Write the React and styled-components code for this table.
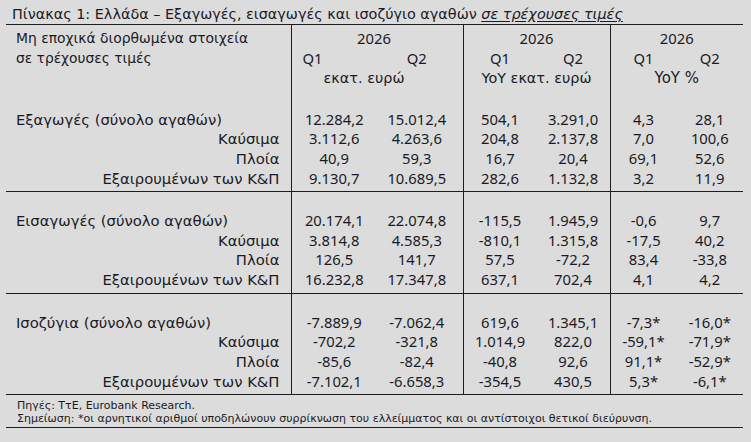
import React from "react";
import styled, { createGlobalStyle } from "styled-components";

const Global = createGlobalStyle`
  html, body { margin: 0; padding: 0; background: #dcdcdc; }
  body { font-family: "Noto Sans", "Open Sans", sans-serif; color: #1b1b26; }
`;

const wordFont = `"DejaVu Sans", "Noto Sans", sans-serif`;

const Page = styled.div`
  width: 751px;
  height: 442px;
  box-sizing: border-box;
  padding: 4px 8px 0 6px;
  background: #dcdcdc;
`;

const Title = styled.div`
  font-family: ${wordFont};
  font-size: 14.4px;
  line-height: 20px;
  height: 20px;
  padding-left: 6px;
  border-bottom: 1.5px solid #1d1d1d;
  white-space: nowrap;
`;

const TitleEm = styled.span`
  font-style: italic;
  text-decoration: underline;
  text-underline-offset: 2px;
`;

const Table = styled.table`
  width: 737px;
  table-layout: fixed;
  border-collapse: collapse;
  font-size: 14.8px;
`;

const Row = styled.tr`
  height: ${(p) => p.$h}px;
`;

const Cell = styled.td`
  padding: 0;
  padding-left: ${(p) => p.$pl || 0}px;
  padding-right: ${(p) => p.$pr || 0}px;
  text-align: ${(p) => p.$align || "center"};
  vertical-align: ${(p) => p.$valign || "middle"};
  line-height: 19.7px;
  white-space: nowrap;
  border-left: ${(p) => (p.$sep ? "1.5px solid #1d1d1d" : "none")};
  border-bottom: ${(p) => (p.$rule ? "1.5px solid #1d1d1d" : "none")};
`;

const WordCell = styled(Cell)`
  font-family: ${wordFont};
  font-size: ${(p) => p.$fs || 14.8}px;
`;

const Footer = styled.div`
  font-family: ${wordFont};
  font-size: 11px;
  line-height: 13px;
  padding: 3.5px 0 2px 11px;
  border-bottom: 1.5px solid #1d1d1d;
  white-space: nowrap;
`;

const sections = [
  [
    ["Εξαγωγές (σύνολο αγαθών)", "12.284,2", "15.012,4", "504,1", "3.291,0", "4,3", "28,1"],
    ["Καύσιμα", "3.112,6", "4.263,6", "204,8", "2.137,8", "7,0", "100,6"],
    ["Πλοία", "40,9", "59,3", "16,7", "20,4", "69,1", "52,6"],
    ["Εξαιρουμένων των Κ&Π", "9.130,7", "10.689,5", "282,6", "1.132,8", "3,2", "11,9"],
  ],
  [
    ["Εισαγωγές (σύνολο αγαθών)", "20.174,1", "22.074,8", "-115,5", "1.945,9", "-0,6", "9,7"],
    ["Καύσιμα", "3.814,8", "4.585,3", "-810,1", "1.315,8", "-17,5", "40,2"],
    ["Πλοία", "126,5", "141,7", "57,5", "-72,2", "83,4", "-33,8"],
    ["Εξαιρουμένων των Κ&Π", "16.232,8", "17.347,8", "637,1", "702,4", "4,1", "4,2"],
  ],
  [
    ["Ισοζύγια (σύνολο αγαθών)", "-7.889,9", "-7.062,4", "619,6", "1.345,1", "-7,3*", "-16,0*"],
    ["Καύσιμα", "-702,2", "-321,8", "1.014,9", "822,0", "-59,1*", "-71,9*"],
    ["Πλοία", "-85,6", "-82,4", "-40,8", "92,6", "91,1*", "-52,9*"],
    ["Εξαιρουμένων των Κ&Π", "-7.102,1", "-6.658,3", "-354,5", "430,5", "5,3*", "-6,1*"],
  ],
];

const sepCols = [false, true, false, true, false, true, false];
const padRight = [0, 0, 6, 0, 0, 0, 0];

function EmptyRow({ h, rule }) {
  return (
    <Row $h={h}>
      {sepCols.map((s, i) => (
        <Cell key={i} $sep={s} $rule={rule} />
      ))}
    </Row>
  );
}

function DataRow({ values, main }) {
  return (
    <Row $h={19.7}>
      <WordCell $align={main ? "left" : "right"} $pl={main ? 10 : 0} $pr={main ? 0 : 11}>
        {values[0]}
      </WordCell>
      {values.slice(1).map((v, i) => (
        <Cell key={i} $sep={sepCols[i + 1]} $pr={padRight[i + 1]}>
          {v}
        </Cell>
      ))}
    </Row>
  );
}

export default function App() {
  return (
    <Page>
      <Global />
      <Title>
        Πίνακας 1: Ελλάδα – Εξαγωγές, εισαγωγές και ισοζύγιο αγαθών{" "}
        <TitleEm>σε τρέχουσες τιμές</TitleEm>
      </Title>
      <Table>
        <colgroup>
          <col style={{ width: 285 }} />
          <col style={{ width: 86 }} />
          <col style={{ width: 86 }} />
          <col style={{ width: 73.5 }} />
          <col style={{ width: 73.5 }} />
          <col style={{ width: 66.5 }} />
          <col style={{ width: 66.5 }} />
        </colgroup>
        <tbody>
          <Row $h={24}>
            <WordCell $align="left" $pl={10} $valign="bottom" $fs={13.9}>
              Μη εποχικά διορθωμένα στοιχεία
            </WordCell>
            <Cell colSpan={2} $sep $valign="bottom" $pr={6}>2026</Cell>
            <Cell colSpan={2} $sep $valign="bottom">2026</Cell>
            <Cell colSpan={2} $sep $valign="bottom">2026</Cell>
          </Row>
          <Row $h={20}>
            <WordCell $align="left" $pl={10} $fs={13.8}>σε τρέχουσες τιμές</WordCell>
            <Cell $sep $align="left" $pl={11}>Q1</Cell>
            <Cell $pr={6}>Q2</Cell>
            <Cell $sep>Q1</Cell>
            <Cell>Q2</Cell>
            <Cell $sep>Q1</Cell>
            <Cell>Q2</Cell>
          </Row>
          <Row $h={20}>
            <Cell />
            <WordCell colSpan={2} $sep $pr={26} $fs={14.4}>εκατ. ευρώ</WordCell>
            <WordCell colSpan={2} $sep $fs={14.4}>YoY εκατ. ευρώ</WordCell>
            <WordCell colSpan={2} $sep $fs={15}>YoY %</WordCell>
          </Row>
          {sections.map((rows, si) => (
            <React.Fragment key={si}>
              <EmptyRow h={si === 0 ? 20.5 : 19.5} />
              {rows.map((r, ri) => (
                <DataRow key={ri} values={r} main={ri === 0} />
              ))}
              <EmptyRow h={3.2} rule />
            </React.Fragment>
          ))}
        </tbody>
      </Table>
      <Footer>
        <div>Πηγές: ΤτΕ, Eurobank Research.</div>
        <div>
          Σημείωση: *οι αρνητικοί αριθμοί υποδηλώνουν συρρίκνωση του ελλείμματος και οι
          αντίστοιχοι θετικοί διεύρυνση.
        </div>
      </Footer>
    </Page>
  );
}
